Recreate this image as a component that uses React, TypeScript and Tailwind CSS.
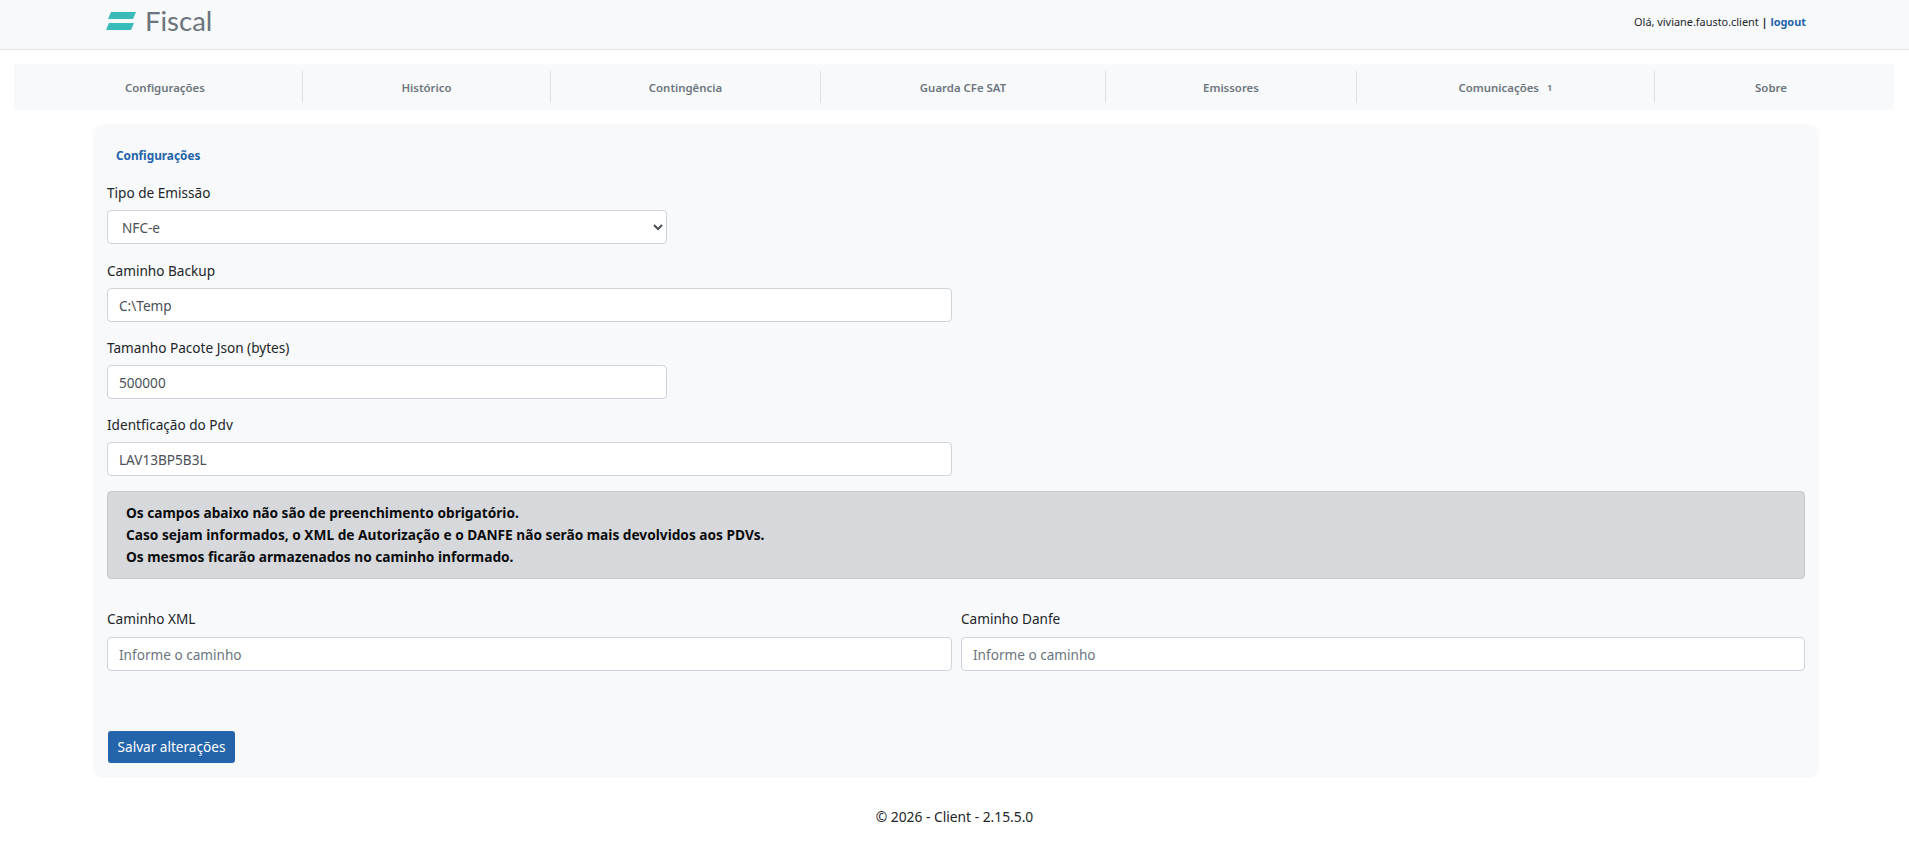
const font = "font-['Noto_Sans','Open_Sans',sans-serif]";

const tabs = [
	{ label: "Configurações", width: "w-[289px] pl-[14px]" },
	{ label: "Histórico", width: "w-[248px]" },
	{ label: "Contingência", width: "w-[270px]" },
	{ label: "Guarda CFe SAT", width: "w-[285px]" },
	{ label: "Emissores", width: "w-[251px]" },
	{ label: "Comunicações", width: "w-[298px]", badge: "1" },
	{ label: "Sobre", width: "flex-1 pr-[7px]" },
];

function Field({
	label,
	value,
	placeholder,
	width,
	gap = "mt-[5px]",
}: {
	label: string;
	value?: string;
	placeholder?: string;
	width: string;
	gap?: string;
}) {
	return (
		<div className={width}>
			<label className="block h-[24px] text-[13.6px] leading-[24px] text-[#212529]">{label}</label>
			<input
				readOnly
				value={value}
				placeholder={placeholder}
				className={`${gap} block h-[34px] w-full rounded-[4px] border border-[#ced4da] bg-white px-[11px] text-[13.6px] text-[#495057] placeholder:text-[#6c757d] outline-none`}
			/>
		</div>
	);
}

export default function App() {
	return (
		<div className={`${font} min-h-screen bg-white text-[#212529]`}>
			{/* Header */}
			<header className="flex h-[50px] items-center justify-between border-b border-[#dee2e6] bg-[#f8f9fa] pb-[4px] pl-[106px] pr-[103px]">
				<div className="flex items-center gap-[9px] pb-[4px]">
					<svg width="30" height="20" viewBox="0 0 30 20" className="shrink-0">
						<polygon points="5,1 30,1 27,8 2,8" fill="#38bbb9" />
						<polygon points="3,12 28,12 25,19 0,19" fill="#38bbb9" />
					</svg>
					<span className="font-['Lato',sans-serif] text-[27.5px] leading-none font-normal text-[#6c757d]">Fiscal</span>
				</div>
				<div className="text-[10.9px] text-[#212529]">
					Olá, viviane.fausto.client <span className="font-bold">|</span>{" "}
					<a className="font-bold text-[#2364aa]">logout</a>
				</div>
			</header>

			{/* Tabs */}
			<nav className="mx-[14px] mt-[14px] flex h-[46px] w-[1880px] items-center bg-[#f8f9fa]">
				{tabs.map((tab, i) => (
					<div
						key={tab.label}
						className={`flex h-[32px] items-center justify-center pt-[2px] ${tab.width} ${i < tabs.length - 1 ? "border-r border-[#dee2e6]" : ""}`}
					>
						<span className="text-[11.4px] font-semibold text-[#6c757d]">{tab.label}</span>
						{tab.badge && <span className="ml-[8px] text-[9.5px] font-semibold text-[#6c757d]">{tab.badge}</span>}
					</div>
				))}
			</nav>

			{/* Card */}
			<main className="mx-[93px] mt-[14px] h-[654px] w-[1726px] rounded-[10px] bg-[#f8f9fa] px-[14px] pt-[22px]">
				<div className="pl-[9px] text-[11.8px] leading-[18px] font-bold text-[#2364aa]">Configurações</div>

				<div className="mt-[17px] w-[560px]">
					<label className="block h-[24px] text-[13.6px] leading-[24px]">Tipo de Emissão</label>
					<select className="mt-[5px] block h-[34px] w-full rounded-[4px] border border-[#ced4da] bg-white px-[10px] text-[13.6px] text-[#495057] outline-none">
						<option>NFC-e</option>
					</select>
				</div>

				<div className="mt-[15px] flex flex-col gap-[14px]">
					<Field label="Caminho Backup" value="C:\Temp" width="w-[845px]" />
					<Field label="Tamanho Pacote Json (bytes)" value="500000" width="w-[560px]" />
					<Field label="Identficação do Pdv" value="LAV13BP5B3L" width="w-[845px]" />
				</div>

				<div className="mt-[15px] h-[88px] w-[1698px] rounded-[4px] border border-[#c6c8ca] bg-[#d6d8db] px-[18px] py-[10px] text-[13.7px] leading-[22px] font-bold text-[#0b0c0d]">
					<p>Os campos abaixo não são de preenchimento obrigatório.</p>
					<p>Caso sejam informados, o XML de Autorização e o DANFE não serão mais devolvidos aos PDVs.</p>
					<p>Os mesmos ficarão armazenados no caminho informado.</p>
				</div>

				<div className="mt-[28px] flex w-[1698px] gap-[9px]">
					<Field label="Caminho XML" placeholder="Informe o caminho" width="w-[845px]" gap="mt-[6px]" />
					<Field label="Caminho Danfe" placeholder="Informe o caminho" width="w-[844px]" gap="mt-[6px]" />
				</div>

				<button className="mt-[60px] ml-[1px] block h-[32px] w-[127px] rounded-[3px] bg-[#2364aa] text-[13.6px] text-white">
					Salvar alterações
				</button>
			</main>

			{/* Footer */}
			<footer className="mt-[29px] text-center text-[13.8px] leading-[20px] text-[#212529]">© 2026 - Client - 2.15.5.0</footer>
		</div>
	);
}
